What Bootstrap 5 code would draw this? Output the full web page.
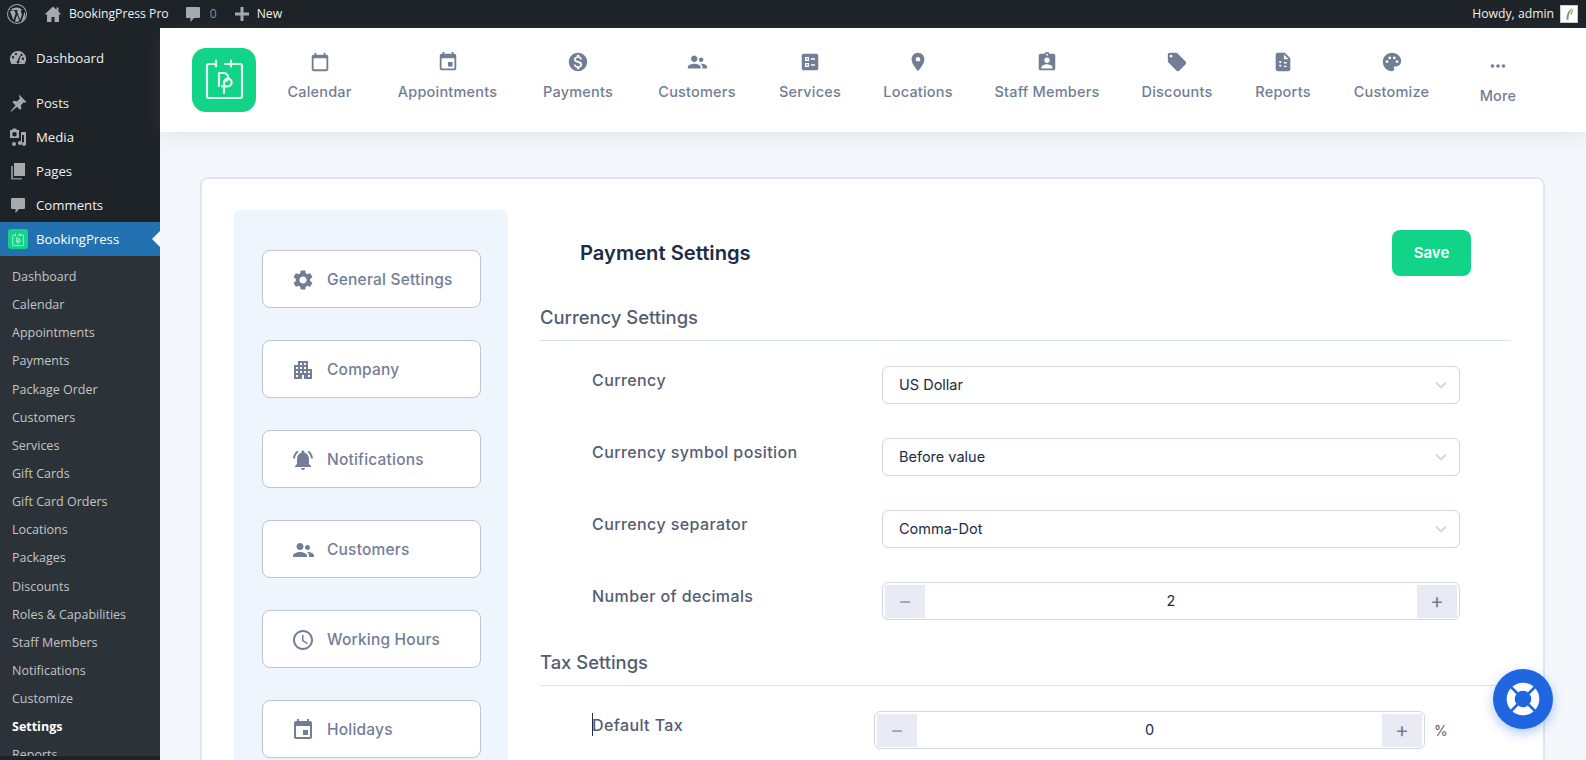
<!DOCTYPE html>
<html lang="en">
<head>
  <meta charset="UTF-8" />
  <meta name="viewport" content="width=device-width, initial-scale=1" />
  <title>BookingPress - Payment Settings</title>
  <link href="https://cdn.jsdelivr.net/npm/bootstrap@5.3.0/dist/css/bootstrap.min.css" rel="stylesheet" />
  <style>
    html, body { height: 100%; overflow: hidden; }
    body { font-family: "Inter", "Liberation Sans", sans-serif; background: #f4f8fc; color: #535d71; }
    /* admin bar */
    .wp-bar { height: 28px; background: #1d2327; color: #f0f0f1; font: 12.2px/28px "Open Sans", sans-serif; padding: 0 8px 0 7px; }
    .wp-bar svg { fill: #a7aaad; display: block; }
    .wp-bar .bar-muted { color: #8c8f94; }
    .bar-home { margin-left: 16px; }
    .bar-site { margin-left: 6px; }
    .bar-comment { margin-left: 14px; }
    .bar-count { margin-left: 7px; }
    .bar-plus { margin-left: 15px; }
    .bar-new { margin-left: 5px; }
    .wp-avatar { width: 18px; height: 18px; background: #fff; border: 1px solid #ccc; margin-left: 6px; }
    .wp-body { height: 732px; }
    /* wp sidebar */
    .wp-side { width: 160px; background: #1d2327; color: #f0f0f1; font: 13.2px/20px "Open Sans", sans-serif; flex: none; }
    .wp-side svg { fill: #a7aaad; width: 20px; height: 20px; flex: none; }
    .side-item { height: 34px; padding-left: 8px; gap: 8px; }
    .side-first { height: 43px; margin-top: 9px; padding-bottom: 1px; margin-bottom: 6px; }
    .side-active { background: #2271b1; color: #fff; position: relative; }
    .side-active::after { content: ""; position: absolute; right: 0; top: 9px; border: 8px solid transparent; border-right-color: #f4f8fc; border-left: 0; }
    .side-logo { width: 20px; height: 20px; background: #12d488; border-radius: 3px; }
    .side-sub { background: #2c3338; font-size: 12.5px; color: #c3c4c7; padding: 7px 0 0 12px; height: 500px; overflow: hidden; }
    .side-sub div { height: 28.15px; line-height: 28px; white-space: nowrap; }
    .side-sub .sub-on { color: #fff; font-weight: 700; }
    /* plugin header */
    .bp-main { min-width: 0; }
    .bp-head { height: 104px; background: #fff; box-shadow: 0 4px 20px rgba(114,126,149,.16); padding: 20px 0 0 32px; position: relative; }
    .bp-logo { width: 64px; height: 64px; background: #12d488; border-radius: 14px; flex: none; }
    .bp-nav { display: grid; grid-template-columns: 67px 101px 72px 78px 60px 68px 102px 70px 54px 75px 50px; column-gap: 44px; margin-left: 30px; }
    .bp-nav svg { width: 22px; height: 22px; fill: #727e95; display: block; margin: 3px auto 9px; }
    .bp-link { font-size: 14.5px; font-weight: 500; letter-spacing: .2px; color: #727e95; text-align: center; white-space: nowrap; line-height: 20px; display: flex; flex-direction: column; align-items: center; }
    .bp-more { padding-top: 4px; }
    /* settings card */
    .bp-card { margin: 45px 41px 0 40px; height: 700px; background: #fff; border: 2px solid #dfe5f5; border-radius: 8px; padding: 31px 32px 0 32px; }
    .set-panel { width: 274px; flex: none; background: #eff5fd; border-radius: 6px; padding: 40px 27px 0 28px; }
    .set-btn { height: 58px; margin-bottom: 32px; background: #fff; border: 1px solid #bcc4d6; border-radius: 8px; padding: 1px 0 0 28px; gap: 12px; font-size: 15.5px; font-weight: 500; letter-spacing: .2px; color: #727e95; white-space: nowrap; }
    .set-btn svg { width: 24px; height: 24px; fill: #727e95; flex: none; }
    .set-form { margin-left: 32px; min-width: 0; }
    .title-row { padding: 20px 40px 0 40px; height: 66px; }
    .title-row h1 { font-size: 20.2px; font-weight: 600; color: #202c45; margin: 0; padding-top: 1px; }
    .btn-save { width: 79px; height: 46px; background: #12d488; border: 0; border-radius: 8px; color: #fff; font-size: 15px; font-weight: 600; padding: 0; }
    .sect-head { height: 65px; margin-bottom: 25px; border-bottom: 1px solid #dce1ea; font-size: 18.4px; font-weight: 500; color: #535d71; padding-top: 27px; line-height: 28px; }
    .form-line { height: 38px; margin-bottom: 34px; padding: 0 51px 0 52px; }
    .line-label { width: 290px; flex: none; font-size: 16px; letter-spacing: .4px; font-weight: 500; color: #535d71; padding-bottom: 11px; white-space: nowrap; position: relative; }
    .tax-label { width: 282px; }
    .tax-label::before { content: ""; position: absolute; left: 0; top: 0; height: 23px; width: 1px; background: #202c45; }
    .field-box { flex: 1 1 auto; height: 38px; border: 1px solid #cfd6e5; border-radius: 6px; font-size: 14.5px; color: #202c45; padding: 0 12px 0 16px; }
    .field-box svg { width: 12px; height: 8px; fill: none; stroke: #c0c6d3; stroke-width: 1.2; }
    .num-box { padding: 2px; text-align: center; }
    .num-step { width: 40px; height: 33px; background: #e8ebf3; color: #727e95; font-size: 21px; font-weight: 400; line-height: 32px; text-align: center; flex: none; }
    .num-minus { color: #9aa3b5; }
    .num-val { flex: 1 1 auto; }
    .tax-box { flex: 0 0 551px; }
    .tax-pct { margin-left: 9px; font-size: 14px; color: #535d71; }
    .tax-sect { height: 32px; padding-top: 0; line-height: 17px; }
    .help-fab { position: absolute; left: 1493px; top: 669px; width: 60px; height: 60px; border-radius: 50%; background: #1f66e0; box-shadow: 0 4px 12px rgba(31,102,224,.35); }
  </style>
</head>
<body>
  <svg width="0" height="0" class="position-absolute">
    <defs>
      <symbol id="i-cal" viewBox="0 0 24 24"><path d="M19 4h-1V2h-2v2H8V2H6v2H5c-1.1 0-2 .9-2 2v14c0 1.1.9 2 2 2h14c1.1 0 2-.9 2-2V6c0-1.1-.9-2-2-2zm0 16H5V8h14v12z"/></symbol>
      <symbol id="i-event" viewBox="0 0 24 24"><path d="M17 12h-5v5h5v-5zM16 1v2H8V1H6v2H5c-1.11 0-1.99.9-1.99 2L3 19c0 1.1.89 2 2 2h14c1.1 0 2-.9 2-2V5c0-1.1-.9-2-2-2h-1V1h-2zm3 18H5V8h14v11z"/></symbol>
      <symbol id="i-money" viewBox="0 0 24 24"><path d="M12 2C6.48 2 2 6.48 2 12s4.48 10 10 10 10-4.48 10-10S17.52 2 12 2zm1.41 16.09V20h-2.67v-1.93c-1.71-.36-3.16-1.46-3.27-3.4h1.96c.1 1.05.82 1.87 2.65 1.87 1.96 0 2.4-.98 2.4-1.59 0-.83-.44-1.61-2.67-2.14-2.48-.6-4.18-1.62-4.18-3.67 0-1.72 1.39-2.84 3.11-3.21V4h2.67v1.95c1.86.45 2.79 1.86 2.85 3.39H14.3c-.05-1.11-.64-1.87-2.22-1.87-1.5 0-2.4.68-2.4 1.64 0 .84.65 1.39 2.67 1.91s4.18 1.39 4.18 3.91c-.01 1.83-1.38 2.83-3.12 3.16z"/></symbol>
      <symbol id="i-people" viewBox="0 0 24 24"><path d="M9 12c1.93 0 3.5-1.57 3.5-3.5S10.93 5 9 5 5.5 6.57 5.5 8.5 7.07 12 9 12zm-7 7v-1.5c0-2.3 4.7-3.5 7-3.5s7 1.2 7 3.5V19H2zm14.5-7c1.38 0 2.5-1.12 2.5-2.5S17.88 7 16.5 7 14 8.12 14 9.5 15.12 12 16.5 12zm.5 2c-.3 0-.6 0-1 .1 1.2.8 2 1.9 2 3.4V19h5v-1.5c0-2.3-3.7-3.5-6-3.5z"/></symbol>
      <symbol id="i-services" viewBox="0 0 24 24"><path fill-rule="evenodd" d="M5 3h14a2 2 0 0 1 2 2v14a2 2 0 0 1-2 2H5a2 2 0 0 1-2-2V5a2 2 0 0 1 2-2zm1.500 3.500V11H11V6.500zM8 8h1.500v1.500H8zM6.500 13v4.500H11V13zM8 14.500h1.500V16H8zM13 8v1.500h4.500V8zm0 6.500V16h4.500v-1.500z"/></symbol>
      <symbol id="i-place" viewBox="0 0 24 24"><path d="M12 2C8.13 2 5 5.13 5 9c0 5.25 7 13 7 13s7-7.75 7-13c0-3.87-3.13-7-7-7zm0 9.500a2.500 2.500 0 0 1 0-5 2.500 2.500 0 0 1 0 5z"/></symbol>
      <symbol id="i-staff" viewBox="0 0 24 24"><path d="M19 3h-4.180C14.400 1.840 13.300 1 12 1s-2.400.84-2.820 2H5c-1.100 0-2 .9-2 2v14c0 1.100.9 2 2 2h14c1.100 0 2-.9 2-2V5c0-1.100-.9-2-2-2zm-7 0c.55 0 1 .45 1 1s-.45 1-1 1-1-.45-1-1 .45-1 1-1zm0 4c1.660 0 3 1.340 3 3s-1.340 3-3 3-3-1.340-3-3 1.340-3 3-3zm6 12H6v-1.400c0-2 4-3.100 6-3.100s6 1.100 6 3.100V19z"/></symbol>
      <symbol id="i-tag" viewBox="0 0 24 24"><path d="M21.410 11.580l-9-9C12.050 2.220 11.550 2 11 2H4c-1.100 0-2 .9-2 2v7c0 .55.22 1.050.59 1.420l9 9c.36.36.86.58 1.410.58.55 0 1.050-.22 1.410-.59l7-7c.37-.36.59-.86.59-1.410 0-.55-.23-1.060-.59-1.420zM5.500 7C4.670 7 4 6.330 4 5.500S4.670 4 5.500 4 7 4.670 7 5.500 6.330 7 5.500 7z"/></symbol>
      <symbol id="i-report" viewBox="0 0 24 24"><path fill-rule="evenodd" d="M14 2H6a2 2 0 0 0-2 2v16a2 2 0 0 0 2 2h12a2 2 0 0 0 2-2V8zm-1 1.800L18.200 9H13zM8 11h2v2H8zm0 4h2v2H8zm5-3h3v1.500h-3zm0 4h3v1.500h-3z"/></symbol>
      <symbol id="i-palette" viewBox="0 0 24 24"><path d="M12 2C6.490 2 2 6.490 2 12s4.490 10 10 10c1.380 0 2.500-1.120 2.500-2.500 0-.61-.23-1.200-.64-1.670-.08-.1-.13-.21-.13-.33 0-.28.22-.5.5-.5H16c3.310 0 6-2.690 6-6 0-4.960-4.490-9-10-9zM6.500 13c-.83 0-1.500-.67-1.500-1.500S5.670 10 6.500 10s1.500.67 1.500 1.500S7.330 13 6.500 13zm3-4C8.670 9 8 8.330 8 7.500S8.670 6 9.500 6s1.500.67 1.500 1.500S10.330 9 9.500 9zm5 0c-.83 0-1.500-.67-1.500-1.500S13.670 6 14.500 6s1.500.67 1.500 1.500S15.330 9 14.500 9zm3 4c-.83 0-1.500-.67-1.500-1.500s.67-1.500 1.500-1.500 1.500.67 1.500 1.500-.67 1.500-1.500 1.500z"/></symbol>
      <symbol id="i-dots" viewBox="0 0 24 24"><circle cx="6" cy="12" r="2"/><circle cx="12" cy="12" r="2"/><circle cx="18" cy="12" r="2"/></symbol>
      <symbol id="i-gear" viewBox="0 0 24 24"><path d="M19.140 12.940c.04-.3.06-.61.06-.94 0-.32-.02-.64-.07-.94l2.030-1.580a.49.49 0 0 0 .12-.61l-1.920-3.320a.488.488 0 0 0-.59-.22l-2.390.96c-.5-.38-1.030-.7-1.620-.94l-.36-2.540a.484.484 0 0 0-.48-.41h-3.840c-.24 0-.43.17-.47.41l-.36 2.540c-.59.24-1.130.57-1.620.94l-2.390-.96c-.22-.08-.47 0-.59.22L2.740 8.870c-.12.21-.08.47.12.61l2.030 1.580c-.05.3-.09.63-.09.94s.02.64.07.94l-2.030 1.580a.49.49 0 0 0-.12.61l1.920 3.320c.12.22.37.29.59.22l2.390-.96c.5.38 1.030.7 1.620.94l.36 2.540c.05.24.24.41.48.41h3.840c.24 0 .44-.17.47-.41l.36-2.540c.59-.24 1.130-.56 1.620-.94l2.390.96c.22.08.47 0 .59-.22l1.920-3.320c.12-.22.07-.47-.12-.61l-2.010-1.580zM12 15.600c-1.980 0-3.600-1.620-3.600-3.600s1.620-3.600 3.600-3.600 3.600 1.620 3.600 3.600-1.620 3.600-3.600 3.600z"/></symbol>
      <symbol id="i-company" viewBox="0 0 24 24"><path d="M17 11V3H7v4H3v14h8v-4h2v4h8V11h-4zM7 19H5v-2h2v2zm0-4H5v-2h2v2zm0-4H5V9h2v2zm4 4H9v-2h2v2zm0-4H9V9h2v2zm0-4H9V5h2v2zm4 8h-2v-2h2v2zm0-4h-2V9h2v2zm0-4h-2V5h2v2zm4 12h-2v-2h2v2zm0-4h-2v-2h2v2z"/></symbol>
      <symbol id="i-bell" viewBox="0 0 24 24"><path d="M7.580 4.080 6.150 2.650C3.750 4.480 2.170 7.300 2.030 10.500h2c.15-2.650 1.510-4.970 3.550-6.420zm12.390 6.420h2c-.15-3.200-1.730-6.020-4.120-7.850l-1.420 1.430c2.020 1.450 3.390 3.770 3.540 6.420zM18 11c0-3.070-1.640-5.640-4.500-6.320V4c0-.83-.67-1.500-1.500-1.500s-1.500.67-1.500 1.500v.68C7.630 5.360 6 7.920 6 11v5l-2 2v1h16v-1l-2-2v-5zm-6 11c.14 0 .27-.01.4-.04.65-.14 1.180-.58 1.440-1.180.1-.24.15-.5.15-.78h-4c.01 1.100.9 2 2.010 2z"/></symbol>
      <symbol id="i-clock" viewBox="0 0 24 24"><path d="M11.990 2C6.470 2 2 6.480 2 12s4.470 10 9.990 10C17.520 22 22 17.520 22 12S17.520 2 11.990 2zM12 20c-4.420 0-8-3.580-8-8s3.580-8 8-8 8 3.580 8 8-3.580 8-8 8zm.5-13H11v6l5.250 3.150.75-1.230-4.500-2.670z"/></symbol>
      <symbol id="i-bp" viewBox="0 0 64 64"><g fill="none" stroke="#fff" stroke-width="2.200" stroke-linecap="round" stroke-linejoin="round" opacity=".88"><path d="M23 16h-6a2 2 0 0 0-2 2v30a2 2 0 0 0 2 2h31a2 2 0 0 0 2-2V18a2 2 0 0 0-2-2H33M24 12.500v6M39 12.500v6"/><path d="M27 38V25h4.500a4.500 4.500 0 0 1 3 8M32 45V34.500a3.800 3.800 0 1 1 3.800 3.800H30"/></g></symbol>
      <symbol id="i-chev" viewBox="0 0 12 8"><path d="M1 1.500l5 5 5-5"/></symbol>
    </defs>
  </svg>

  <div class="wp-bar d-flex align-items-center">
    <svg width="20" height="20" viewBox="0 0 20 20"><path fill-rule="evenodd" d="M10 0a10 10 0 1 0 0 20 10 10 0 0 0 0-20zm0 1a9 9 0 1 1 0 18 9 9 0 0 1 0-18zM3 7l3.300 9.200L8.600 9.500 7.500 6.700l-1-.1V6h4.500v.6l-1.100.1 3.200 9.300 1-3c.4-1.200.7-2 .7-2.800 0-1.200-1-1.800-.9-3 .1-.7.4-1.200 1-1.500A7.700 7.700 0 0 0 3.600 6H6v.6z"/><path d="M10.200 10.800l-2.300 6.600c1.400.4 2.900.4 4.500-.1zM17.300 7.500c.1 1.400-.2 2.700-.8 4.100l-2.300 6.300c2.600-1.600 4.400-4.300 4-7.500-.1-1-.4-2-.9-2.900z"/></svg>
    <svg class="bar-home" width="20" height="20" viewBox="0 0 20 20"><path d="M10 2.500L1.500 10.500h2.500V18h4.500v-5h3v5H16v-7.500h2.500L15.500 7.700V3.500h-2v2.300z"/></svg>
    <span class="bar-site">BookingPress Pro</span>
    <svg class="bar-comment" width="20" height="20" viewBox="0 0 20 20"><path d="M4 3h12a1 1 0 0 1 1 1v9a1 1 0 0 1-1 1h-5l-3.500 4v-4H4a1 1 0 0 1-1-1V4a1 1 0 0 1 1-1z"/></svg>
    <span class="bar-count bar-muted">0</span>
    <svg class="bar-plus" width="20" height="20" viewBox="0 0 20 20"><path d="M8.500 3h3v5.500H17v3h-5.500V17h-3v-5.500H3v-3h5.500z"/></svg>
    <span class="bar-new">New</span>
    <span class="ms-auto">Howdy, admin</span>
    <span class="wp-avatar d-block"><svg width="16" height="16" viewBox="0 0 15 15"><path d="M5 13C5 8 7 3 11 2 8 5 7 9 7 13zM9 8c0-2 1-4 3-5-1 2-1.500 3-2 5z" fill="#8a9a6a"/></svg></span>
  </div>

  <div class="wp-body d-flex">
    <aside class="wp-side">
      <div class="side-item side-first d-flex align-items-center"><svg viewBox="0 0 20 20"><path fill-rule="evenodd" d="M10 3a8 8 0 0 0-7 12l.5 1h13l.5-1A8 8 0 0 0 10 3zM5 10.500a1.200 1.200 0 1 1 0-2.400 1.200 1.200 0 0 1 0 2.400zm3-3.200a1.200 1.200 0 1 1 0-2.400 1.200 1.200 0 0 1 0 2.400zm3.500 7.200a1.700 1.700 0 0 1-3 0c0-.7.4-1.300 1-1.500L12.500 6l.8.3-2.200 6.800c.3.300.4.800.4 1.400zm1.200-6.800a1.200 1.200 0 1 1 1.600 0 1.200 1.200 0 0 1-1.600 0zM15 12a1.200 1.200 0 1 1 0-2.400 1.200 1.200 0 0 1 0 2.400z"/></svg>Dashboard</div>
      <div class="side-item d-flex align-items-center"><svg viewBox="0 0 20 20"><path d="M11 1.500l7.500 7.500-1.500.8-1.200-.6-3 3 .6 3.300-1.400 1.200-3-3-6 5-.5-.5 5-6-3-3 1.200-1.400 3.300.6 3-3-.6-1.200z"/></svg>Posts</div>
      <div class="side-item d-flex align-items-center"><svg viewBox="0 0 20 20"><path fill-rule="evenodd" d="M2 3h2l1-1.500h3L9 3h2v8H2zm4.500 2a2.300 2.300 0 1 0 0 4.600 2.300 2.300 0 0 0 0-4.600zM13 5h5v12a2 2 0 1 1-2-2V8h-2v8a2 2 0 1 1-1-1.700zM8 17a2 2 0 1 1-2-2 2 2 0 0 1 2 2z"/></svg>Media</div>
      <div class="side-item d-flex align-items-center"><svg viewBox="0 0 20 20"><path d="M6 2h11v13H6z"/><path d="M3 5h2v12h9v1.500H3z" opacity=".75"/></svg>Pages</div>
      <div class="side-item d-flex align-items-center"><svg viewBox="0 0 20 20"><path d="M4 3h12a1 1 0 0 1 1 1v9a1 1 0 0 1-1 1h-5l-3.500 4v-4H4a1 1 0 0 1-1-1V4a1 1 0 0 1 1-1z"/></svg>Comments</div>
      <div class="side-item side-active d-flex align-items-center"><span class="side-logo d-block"><svg viewBox="0 0 64 64"><use href="#i-bp"/></svg></span>BookingPress</div>
      <div class="side-sub">
        <div>Dashboard</div><div>Calendar</div><div>Appointments</div><div>Payments</div><div>Package Order</div><div>Customers</div><div>Services</div><div>Gift Cards</div><div>Gift Card Orders</div><div>Locations</div><div>Packages</div><div>Discounts</div><div>Roles &amp; Capabilities</div><div>Staff Members</div><div>Notifications</div><div>Customize</div><div class="sub-on">Settings</div><div>Reports</div>
      </div>
    </aside>

    <main class="bp-main flex-grow-1">
      <header class="bp-head d-flex align-items-start">
        <svg class="bp-logo" viewBox="0 0 64 64"><use href="#i-bp"/></svg>
        <nav class="bp-nav">
          <a class="bp-link text-decoration-none"><svg><use href="#i-cal"/></svg>Calendar</a>
          <a class="bp-link text-decoration-none"><svg><use href="#i-event"/></svg>Appointments</a>
          <a class="bp-link text-decoration-none"><svg><use href="#i-money"/></svg>Payments</a>
          <a class="bp-link text-decoration-none"><svg><use href="#i-people"/></svg>Customers</a>
          <a class="bp-link text-decoration-none"><svg><use href="#i-services"/></svg>Services</a>
          <a class="bp-link text-decoration-none"><svg><use href="#i-place"/></svg>Locations</a>
          <a class="bp-link text-decoration-none"><svg><use href="#i-staff"/></svg>Staff Members</a>
          <a class="bp-link text-decoration-none"><svg><use href="#i-tag"/></svg>Discounts</a>
          <a class="bp-link text-decoration-none"><svg><use href="#i-report"/></svg>Reports</a>
          <a class="bp-link text-decoration-none"><svg><use href="#i-palette"/></svg>Customize</a>
          <a class="bp-link bp-more text-decoration-none"><svg><use href="#i-dots"/></svg>More</a>
        </nav>
      </header>

      <section class="bp-card d-flex">
        <div class="set-panel">
          <div class="set-btn d-flex align-items-center"><svg><use href="#i-gear"/></svg>General Settings</div>
          <div class="set-btn d-flex align-items-center"><svg><use href="#i-company"/></svg>Company</div>
          <div class="set-btn d-flex align-items-center"><svg><use href="#i-bell"/></svg>Notifications</div>
          <div class="set-btn d-flex align-items-center"><svg><use href="#i-people"/></svg>Customers</div>
          <div class="set-btn d-flex align-items-center"><svg><use href="#i-clock"/></svg>Working Hours</div>
          <div class="set-btn d-flex align-items-center"><svg><use href="#i-event"/></svg>Holidays</div>
        </div>
        <div class="set-form flex-grow-1">
          <div class="title-row d-flex justify-content-between align-items-center">
            <h1>Payment Settings</h1>
            <button type="button" class="btn btn-save">Save</button>
          </div>
          <div class="sect-head">Currency Settings</div>
          <div class="form-line d-flex align-items-center">
            <div class="line-label">Currency</div>
            <div class="field-box d-flex align-items-center justify-content-between">US Dollar<svg><use href="#i-chev"/></svg></div>
          </div>
          <div class="form-line d-flex align-items-center">
            <div class="line-label">Currency symbol position</div>
            <div class="field-box d-flex align-items-center justify-content-between">Before value<svg><use href="#i-chev"/></svg></div>
          </div>
          <div class="form-line d-flex align-items-center">
            <div class="line-label">Currency separator</div>
            <div class="field-box d-flex align-items-center justify-content-between">Comma-Dot<svg><use href="#i-chev"/></svg></div>
          </div>
          <div class="form-line d-flex align-items-center">
            <div class="line-label">Number of decimals</div>
            <div class="field-box num-box d-flex align-items-center"><span class="num-step num-minus">−</span><span class="num-val">2</span><span class="num-step">+</span></div>
          </div>
          <div class="sect-head tax-sect">Tax Settings</div>
          <div class="form-line d-flex align-items-center">
            <div class="line-label tax-label">Default Tax</div>
            <div class="field-box num-box tax-box d-flex align-items-center"><span class="num-step num-minus">−</span><span class="num-val">0</span><span class="num-step">+</span></div>
            <span class="tax-pct">%</span>
          </div>
        </div>
      </section>
    </main>
  </div>

  <div class="help-fab d-flex align-items-center justify-content-center">
    <svg width="36" height="36" viewBox="0 0 36 36"><circle cx="18" cy="18" r="12.300" fill="none" stroke="#fff" stroke-width="8"/><path d="M5.500 5.500l7 7M30.500 5.500l-7 7M5.500 30.500l7-7M30.500 30.500l-7-7" stroke="#1f66e0" stroke-width="2.500"/></svg>
  </div>

  <script src="https://cdn.jsdelivr.net/npm/bootstrap@5.3.0/dist/js/bootstrap.bundle.min.js"></script>
</body>
</html>
